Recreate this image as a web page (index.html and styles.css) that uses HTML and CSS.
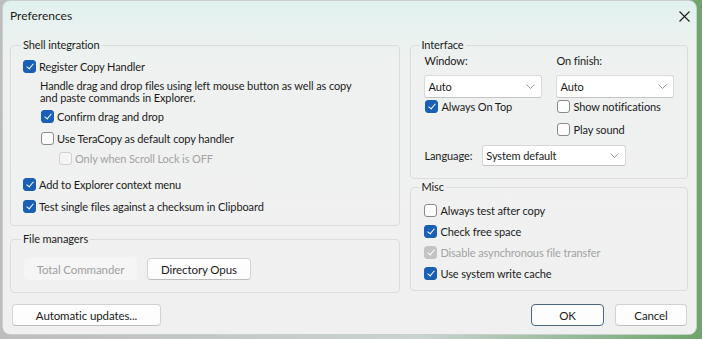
FILE: index.html
```html
<!DOCTYPE html>
<html lang="en">
<head>
  <meta charset="UTF-8" />
  <title>Preferences</title>
  <link rel="stylesheet" href="styles.css">
</head>
<body>

  <div class="janela">
    <!-- BARRA DE TITULO -->
    <div class="titulo">
      <span>Preferences</span>
      <svg class="fechar" width="11" height="11" viewBox="0 0 11 11">
        <path d="M0.5 0.5 L10.5 10.5 M10.5 0.5 L0.5 10.5" stroke="#1b1b1b" stroke-width="1.1" fill="none"/>
      </svg>
    </div>

    <div class="conteudo">
      <!-- COLUNA ESQUERDA -->
      <div class="coluna-esq">
        <fieldset class="grupo shell">
          <legend>Shell integration</legend>
          <label class="check m6"><span class="box on"></span>Register Copy Handler</label>
          <p class="desc">Handle drag and drop files using left mouse button as well as copy<br>and paste commands in Explorer.</p>
          <label class="check ind1 m4"><span class="box on"></span>Confirm drag and drop</label>
          <label class="check ind1 m6"><span class="box"></span>Use TeraCopy as default copy handler</label>
          <label class="check ind2 m4 off"><span class="box"></span>Only when Scroll Lock is OFF</label>
          <label class="check m10"><span class="box on"></span>Add to Explorer context menu</label>
          <label class="check m6"><span class="box on"></span>Test single files against a checksum in Clipboard</label>
        </fieldset>

        <fieldset class="grupo fm">
          <legend>File managers</legend>
          <div class="linha-btn">
            <button class="btn btn-total" disabled>Total Commander</button>
            <button class="btn btn-opus">Directory Opus</button>
          </div>
        </fieldset>
      </div>

      <!-- COLUNA DIREITA -->
      <div class="coluna-dir">
        <fieldset class="grupo interface">
          <legend>Interface</legend>
          <div class="duas-col">
            <div class="col">
              <div class="rotulo">Window:</div>
              <div class="select"><span>Auto</span><svg width="9" height="5" viewBox="0 0 9 5"><path d="M0.5 0.5 L4.5 4.5 L8.5 0.5" stroke="#9a9a9a" fill="none"/></svg></div>
              <label class="check"><span class="box on"></span>Always On Top</label>
            </div>
            <div class="col">
              <div class="rotulo">On finish:</div>
              <div class="select"><span>Auto</span><svg width="9" height="5" viewBox="0 0 9 5"><path d="M0.5 0.5 L4.5 4.5 L8.5 0.5" stroke="#9a9a9a" fill="none"/></svg></div>
              <label class="check"><span class="box"></span>Show notifications</label>
              <label class="check m7"><span class="box"></span>Play sound</label>
            </div>
          </div>
          <div class="idioma">
            <span>Language:</span>
            <div class="select select-idioma"><span>System default</span><svg width="9" height="5" viewBox="0 0 9 5"><path d="M0.5 0.5 L4.5 4.5 L8.5 0.5" stroke="#9a9a9a" fill="none"/></svg></div>
          </div>
        </fieldset>

        <fieldset class="grupo misc">
          <legend>Misc</legend>
          <label class="check m8"><span class="box"></span>Always test after copy</label>
          <label class="check m5"><span class="box on"></span>Check free space</label>
          <label class="check m5 off"><span class="box on"></span>Disable asynchronous file transfer</label>
          <label class="check m5"><span class="box on"></span>Use system write cache</label>
        </fieldset>
      </div>
    </div>

    <!-- RODAPE -->
    <div class="rodape">
      <button class="btn btn-update">Automatic updates...</button>
      <div class="espaco"></div>
      <button class="btn btn-ok">OK</button>
      <button class="btn btn-cancel">Cancel</button>
    </div>
  </div>

</body>
</html>
```

FILE: styles.css
```css
body {
  margin: 0;
  padding: 0 5px 4px 2px;
  height: 339px;
  box-sizing: border-box;
  font-family: 'Lato', sans-serif;
  font-size: 11px;
  letter-spacing: -0.1px;
  color: #1b1b1b;
  background: linear-gradient(90deg, #bdbdbd 0%, #c9d3cf 60%, #6da56b 100%);
  overflow: hidden;
}

.janela {
  height: 335px;
  box-sizing: border-box;
  border-radius: 8px;
  border: 1px solid #c8cfcc;
  background: linear-gradient(180deg, #e0f1ee 0px, #e9f2f0 30px, #eff1f0 70px, #f0f0f0 100%);
  display: flex;
  flex-direction: column;
  overflow: hidden;
}

/* TITULO */
.titulo {
  height: 37px;
  box-sizing: border-box;
  display: flex;
  align-items: flex-start;
  justify-content: space-between;
  padding: 7px 6px 0 7px;
  font-size: 12px;
  letter-spacing: 0;
}

.fechar {
  margin-top: 3px;
}

/* CONTEUDO */
.conteudo {
  display: flex;
  gap: 10px;
  padding: 0 8px 0 7px;
}

.coluna-esq {
  width: 391px;
  display: flex;
  flex-direction: column;
  gap: 6px;
}

.coluna-dir {
  width: 278px;
  display: flex;
  flex-direction: column;
  gap: 1px;
}

.grupo {
  margin: 0;
  border: 1px solid #dcdcdc;
  border-radius: 4px;
  padding: 0 8px 0 12px;
  min-width: 0;
}

.grupo legend {
  padding: 0 2px;
  margin-left: -2px;
  line-height: 14px;
}

.shell {
  padding-bottom: 11px;
}

.fm {
  padding-bottom: 12px;
}

.interface {
  padding: 0 12px 12px 13px;
}

.misc {
  padding: 0 12px 9px 13px;
}

.interface legend,
.misc legend {
  margin-left: -5px;
}

/* CHECKBOXES */
.check {
  display: flex;
  align-items: center;
  gap: 3px;
  height: 16px;
  white-space: nowrap;
}

.box {
  width: 11px;
  height: 11px;
  border: 1px solid #8a8a8a;
  border-radius: 3px;
  background: #fdfdfd;
  position: relative;
  flex: none;
}

.box.on {
  background: #1a5fb4;
  border-color: #1a5fb4;
}

.box.on::after {
  content: '';
  position: absolute;
  left: 3.5px;
  top: 1.5px;
  width: 3px;
  height: 6px;
  border: solid #ffffff;
  border-width: 0 1.2px 1.2px 0;
  transform: rotate(40deg);
}

.check.off {
  color: #a3a3a3;
}

.check.off .box {
  border-color: #cfcfcf;
  background: #f5f5f5;
}

.check.off .box.on {
  background: #c4c4c4;
  border-color: #c4c4c4;
}

.ind1 { margin-left: 18px; }
.ind2 { margin-left: 36px; }

.m4 { margin-top: 4px; }
.m5 { margin-top: 5px; }
.m6 { margin-top: 6px; }
.m7 { margin-top: 7px; }
.m8 { margin-top: 8px; }
.m10 { margin-top: 10px; }

.desc {
  margin: 6px 0 0 17px;
  line-height: 12px;
}

/* BOTOES */
.btn {
  font-family: inherit;
  font-size: 11.5px;
  letter-spacing: -0.1px;
  color: #1b1b1b;
  height: 22px;
  padding: 0;
  background: #fdfdfd;
  border: 1px solid #d3d3d3;
  border-bottom-color: #bdbdbd;
  border-radius: 4px;
}

.linha-btn {
  display: flex;
  gap: 10px;
  margin-top: 12px;
}

.btn-total {
  width: 113px;
  margin-left: 1px;
  background: #f5f5f5;
  border-color: #f5f5f5;
  color: #a0a0a0;
}

.btn-opus {
  width: 104px;
}

/* INTERFACE */
.duas-col {
  display: flex;
  gap: 14px;
}

.col {
  width: 118px;
  display: flex;
  flex-direction: column;
}

.col .check {
  margin-left: 1px;
}

.rotulo {
  margin-top: 2px;
  line-height: 14px;
}

.select {
  height: 23px;
  box-sizing: border-box;
  margin-top: 7px;
  background: #ffffff;
  border: 1px solid #d8d8d8;
  border-bottom-color: #c4c4c4;
  border-radius: 3px;
  display: flex;
  align-items: center;
  justify-content: space-between;
  padding: 0 6px 0 3px;
}

.idioma {
  display: flex;
  align-items: center;
  gap: 10px;
  margin-top: 8px;
}

.select-idioma {
  margin-top: 0;
  width: 144px;
  height: 21px;
}

/* RODAPE */
.rodape {
  display: flex;
  gap: 11px;
  padding: 11px 9px 0 9px;
}

.espaco {
  flex: 1;
}

.btn-update {
  width: 149px;
}

.btn-ok {
  width: 73px;
  border: 1px solid #4f6882;
}

.btn-cancel {
  width: 72px;
}
```
